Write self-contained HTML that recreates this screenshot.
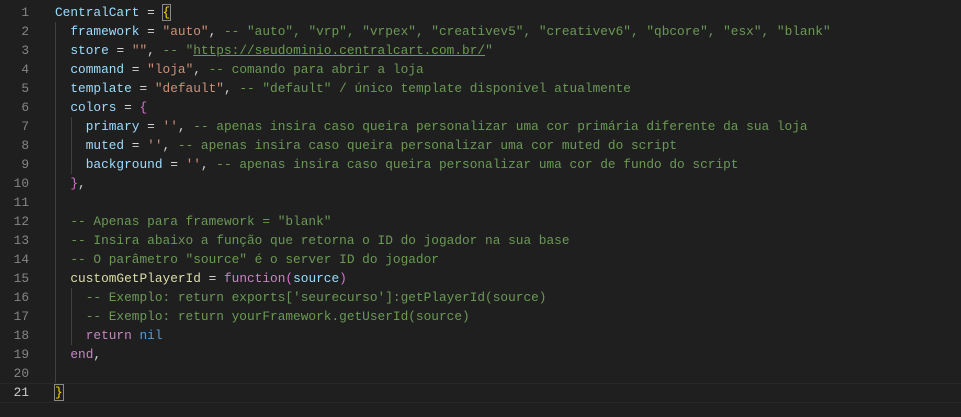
<!DOCTYPE html><html><head><style>
body{margin:0;background:#1f1f1f;width:961px;height:417px;overflow:hidden;font-family:"Liberation Mono",monospace;font-size:12.8px;}
.w{position:relative;padding-top:3px}
.l{height:19px;line-height:19px;white-space:pre;position:relative}
.n{position:absolute;left:0;width:29px;text-align:right;color:#858585}
.c{position:absolute;left:55px;color:#d4d4d4}
.v{color:#9cdcfe}.s{color:#ce9178}.m{color:#6a9955}.k{color:#c586c0}.b{color:#569cd6}.f{color:#dcdcaa}
.y{color:#ffd700}.p{color:#da70d6}.u{text-decoration:underline}
.g{position:absolute;width:1px;background:#404040}
.cur{position:absolute;left:0;right:0;top:383px;height:18px;border-top:1px solid #282828;border-bottom:1px solid #282828}
</style></head><body><div class="w">
<div class="cur"></div>
<div class="g" style="left:55px;top:22px;height:361px"></div>
<div class="g" style="left:71px;top:117px;height:57px"></div>
<div class="g" style="left:71px;top:288px;height:57px"></div>
<div class="l"><span class="n">1</span><span class="c"><span class="v">CentralCart</span> = <span class="y" style="outline:1px solid #888">{</span></span></div>
<div class="l"><span class="n">2</span><span class="c">  <span class="v">framework</span> = <span class="s">"auto"</span>, <span class="m">-- "auto", "vrp", "vrpex", "creativev5", "creativev6", "qbcore", "esx", "blank"</span></span></div>
<div class="l"><span class="n">3</span><span class="c">  <span class="v">store</span> = <span class="s">""</span>, <span class="m">-- "<span class="u">https://seudominio.centralcart.com.br/</span>"</span></span></div>
<div class="l"><span class="n">4</span><span class="c">  <span class="v">command</span> = <span class="s">"loja"</span>, <span class="m">-- comando para abrir a loja</span></span></div>
<div class="l"><span class="n">5</span><span class="c">  <span class="v">template</span> = <span class="s">"default"</span>, <span class="m">-- "default" / único template disponível atualmente</span></span></div>
<div class="l"><span class="n">6</span><span class="c">  <span class="v">colors</span> = <span class="p">{</span></span></div>
<div class="l"><span class="n">7</span><span class="c">    <span class="v">primary</span> = <span class="s">''</span>, <span class="m">-- apenas insira caso queira personalizar uma cor primária diferente da sua loja</span></span></div>
<div class="l"><span class="n">8</span><span class="c">    <span class="v">muted</span> = <span class="s">''</span>, <span class="m">-- apenas insira caso queira personalizar uma cor muted do script</span></span></div>
<div class="l"><span class="n">9</span><span class="c">    <span class="v">background</span> = <span class="s">''</span>, <span class="m">-- apenas insira caso queira personalizar uma cor de fundo do script</span></span></div>
<div class="l"><span class="n">10</span><span class="c">  <span class="p">}</span>,</span></div>
<div class="l"><span class="n">11</span><span class="c"></span></div>
<div class="l"><span class="n">12</span><span class="c">  <span class="m">-- Apenas para framework = "blank"</span></span></div>
<div class="l"><span class="n">13</span><span class="c">  <span class="m">-- Insira abaixo a função que retorna o ID do jogador na sua base</span></span></div>
<div class="l"><span class="n">14</span><span class="c">  <span class="m">-- O parâmetro "source" é o server ID do jogador</span></span></div>
<div class="l"><span class="n">15</span><span class="c">  <span class="f">customGetPlayerId</span> = <span class="k">function</span><span class="p">(</span><span class="v">source</span><span class="p">)</span></span></div>
<div class="l"><span class="n">16</span><span class="c">    <span class="m">-- Exemplo: return exports['seurecurso']:getPlayerId(source)</span></span></div>
<div class="l"><span class="n">17</span><span class="c">    <span class="m">-- Exemplo: return yourFramework.getUserId(source)</span></span></div>
<div class="l"><span class="n">18</span><span class="c">    <span class="k">return</span> <span class="b">nil</span></span></div>
<div class="l"><span class="n">19</span><span class="c">  <span class="k">end</span>,</span></div>
<div class="l"><span class="n">20</span><span class="c"></span></div>
<div class="l"><span class="n" style="color:#cccccc">21</span><span class="c"><span class="y" style="outline:1px solid #888">}</span></span></div>
</div></body></html>
